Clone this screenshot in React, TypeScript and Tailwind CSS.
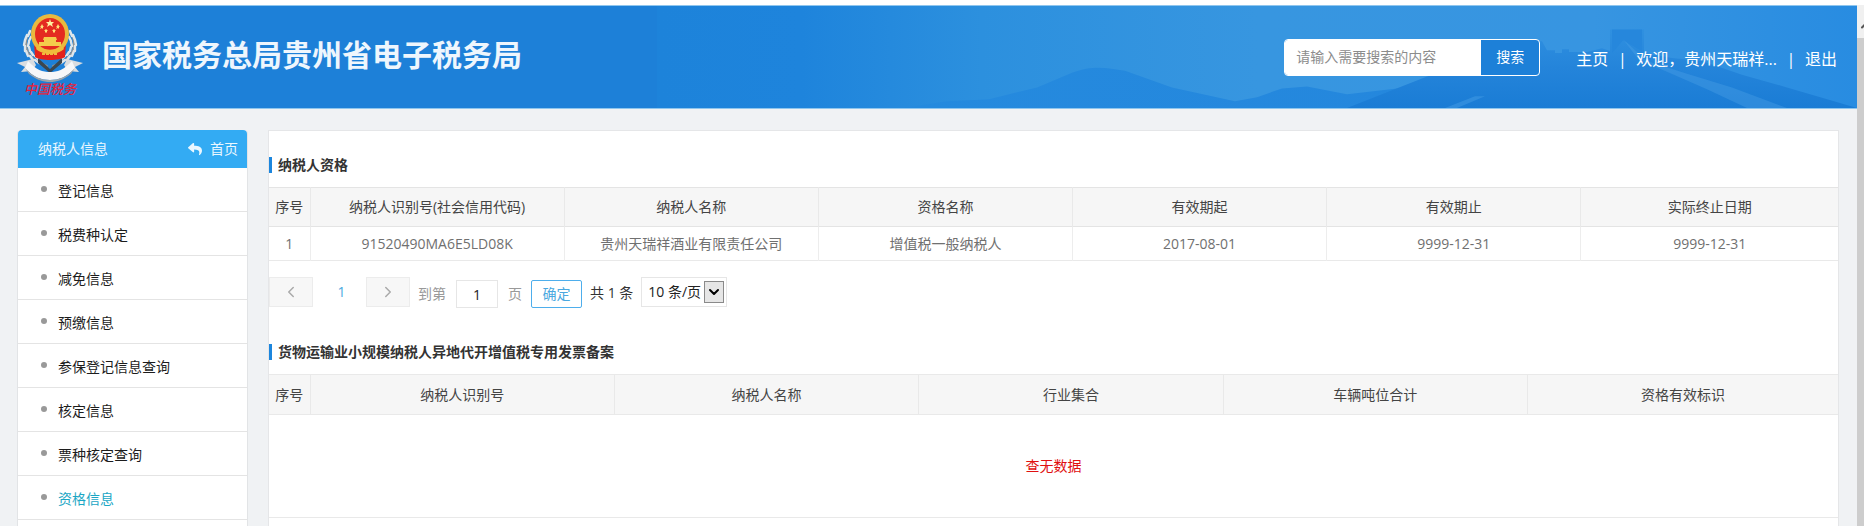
import { FaReply } from 'react-icons/fa';
import { ChevronDown, ChevronLeft, ChevronRight, ChevronUp } from 'lucide-react';

interface QualificationRow {
    taxpayerId: string;
    taxpayerName: string;
    qualification: string;
    validFrom: string;
    validTo: string;
    endDate: string;
}

const menuItems = [
    '登记信息',
    '税费种认定',
    '减免信息',
    '预缴信息',
    '参保登记信息查询',
    '核定信息',
    '票种核定查询',
    '资格信息',
];
const activeItem = '资格信息';

const qualificationColumns = ['纳税人识别号(社会信用代码)', '纳税人名称', '资格名称', '有效期起', '有效期止', '实际终止日期'];
const qualificationRows: QualificationRow[] = [
    {
        taxpayerId: '91520490MA6E5LD08K',
        taxpayerName: '贵州天瑞祥酒业有限责任公司',
        qualification: '增值税一般纳税人',
        validFrom: '2017-08-01',
        validTo: '9999-12-31',
        endDate: '9999-12-31',
    },
];

const invoiceColumns = ['纳税人识别号', '纳税人名称', '行业集合', '车辆吨位合计', '资格有效标识'];

function Emblem() {
    return (
        <svg className="h-22 w-17 shrink-0" viewBox="0 0 68 88" role="img" aria-label="中国税务">
            {/* wheat ears */}
            <g fill="none" stroke="#dfe6ea" strokeLinecap="round">
                <path d="M14 19C6 30 9 46 31 53" strokeWidth="2" stroke="#8b9093" />
                <path d="M54 19C62 30 59 46 37 53" strokeWidth="2" stroke="#8b9093" />
                <path
                    d="M14 18l-2 5M11 22l-2 5M9 27l-1 5M9 33l0 5M10 38l2 5M14 43l3 4M19 47l4 3M15 24l-2 4M13 29l-1 4M13 34l1 4M15 39l2 3M19 43l3 3"
                    strokeWidth="2.4"
                />
                <path
                    d="M54 18l2 5M57 22l2 5M59 27l1 5M59 33l0 5M58 38l-2 5M54 43l-3 4M49 47l-4 3M53 24l2 4M55 29l1 4M55 34l-1 4M53 39l-2 3M49 43l-3 3"
                    strokeWidth="2.4"
                />
            </g>
            <path d="M22 45L34 56L46 45V50L34 60L22 50z" fill="#3a4650" />
            {/* ribbon */}
            <path d="M1 50L17 46L20 52L16 58L5 59L9 54z" fill="#d9dde0" />
            <path d="M67 50L51 46L48 52L52 58L63 59L59 54z" fill="#d9dde0" />
            <path d="M12 48C20 57 27 59 34 59C41 59 48 57 56 48L59 55C51 64 43 67 34 67C25 67 17 64 9 55z" fill="#f6f7f8" />
            <path d="M9 55C17 64 25 67 34 67C43 67 51 64 59 55L55 61C47 67 41 69 34 69C27 69 21 67 13 61z" fill="#9ea5a9" />
            {/* national emblem */}
            <path d="M18 29h32l-1 15c-5 4-25 4-30 0z" fill="#e3221c" />
            <ellipse cx="34" cy="21" rx="19" ry="20" fill="#e9b93e" />
            <ellipse cx="34" cy="21" rx="15" ry="16" fill="#e42a20" />
            <path d="M34 6l1 3h3l-2 2 1 3-3-2-3 2 1-3-2-2h3z" fill="#fff0a0" />
            <path
                d="M26 11l1 2h1l-1 1v2l-1-1-2 1 1-2-1-1h1zM42 11l1 2h1l-1 1v2l-1-1-2 1 1-2-1-1h1zM30 16l1 1h1l-1 1v2l-1-1-1 1v-2l-1-1h1zM38 16l1 1h1l-1 1v2l-1-1-1 1v-2l-1-1h1z"
                fill="#ffe27a"
            />
            <path d="M28 24h12l1 3h-1v2h5v4H23v-4h5v-2h-1z" fill="#f4cc4b" />
            <path d="M22 33c6 5 18 5 24 0l2 3c-6 6-22 6-28 0z" fill="#f0bd3c" />
            <path d="M26 41h16" stroke="#f0bd3c" strokeWidth="2" strokeDasharray="3 1" />
            <text x="34" y="81" textAnchor="middle" fontSize="13" fontStyle="italic" fontWeight="500" fill="#e5233d">
                中国税务
            </text>
        </svg>
    );
}

function HeaderScenery() {
    return (
        <svg
            className="absolute inset-y-0 right-0 h-full w-[1200px]"
            viewBox="0 0 1200 104"
            preserveAspectRatio="none"
            aria-hidden="true"
        >
            <defs>
                <linearGradient id="sky" x1="0" y1="0" x2="1" y2="0">
                    <stop offset="0" stopColor="#1d83da" />
                    <stop offset="0.12" stopColor="#1e84dc" />
                    <stop offset="0.27" stopColor="#2c90de" />
                    <stop offset="0.5" stopColor="#3796e0" />
                    <stop offset="0.78" stopColor="#3795e1" />
                    <stop offset="1" stopColor="#288ce1" />
                </linearGradient>
                <linearGradient id="ridge" x1="0" y1="0" x2="0" y2="1">
                    <stop offset="0" stopColor="#2f90e0" />
                    <stop offset="0.5" stopColor="#2484da" />
                    <stop offset="1" stopColor="#1a7cd5" />
                </linearGradient>
                <linearGradient id="hill" x1="0" y1="0" x2="1" y2="0">
                    <stop offset="0" stopColor="#258ade" />
                    <stop offset="1" stopColor="#2487dd" />
                </linearGradient>
            </defs>
            <rect width="1200" height="104" fill="url(#sky)" />
            <path
                d="M245 104L290 97L332 95L380 83L415 68C436 60 450 63 468 66L515 83L578 97L600 93L625 84L650 82L690 90L740 84L780 104z"
                fill="url(#hill)"
            />
            <path
                d="M690 104L735 86L770 72L800 62L835 44L855 34L885 36L890 45H898V48H905V44H912V47H930L945 43L953 46V24H987V48L1015 53L1045 56L1085 70L1130 83L1160 92L1200 104z"
                fill="url(#ridge)"
            />
            <path d="M955 24H985V46L966 35L955 48z" fill="#2687dc" />
            <path d="M966 34L990 56L1030 69L1075 83L1130 104H1090L1050 85L1010 67L982 55z" fill="#4aa0e6" opacity="0.4" />
            <path d="M788 104L818 92L828 92L800 104z" fill="#4aa0e6" opacity="0.45" />
        </svg>
    );
}

function Header() {
    return (
        <header className="relative flex h-26 shrink-0 items-center border-y border-[#8fc6ee] bg-[#1d80d8] pr-5 pl-4">
            <HeaderScenery />
            <div className="relative flex min-w-0 flex-1 items-center gap-[18px]">
                <Emblem />
                <h1 className="pb-1 text-[30px] leading-10 font-bold whitespace-nowrap text-[#eef6fd]">国家税务总局贵州省电子税务局</h1>
            </div>
            <form className="relative flex h-[37px] w-64 shrink-0 overflow-hidden rounded-sm border border-white bg-[#1d80d8]">
                <input
                    type="text"
                    aria-label="搜索"
                    placeholder="请输入需要搜索的内容"
                    className="min-w-0 flex-1 bg-white px-[11px] text-sm outline-none placeholder:text-[#8c8c8c]"
                />
                <button type="button" className="w-[58px] text-sm text-white">
                    搜索
                </button>
            </form>
            <nav className="relative ml-9 flex shrink-0 items-center pt-1 text-base text-white">
                <a href="#home">主页</a>
                <span className="w-7 text-center">|</span>
                <a href="#user">欢迎，贵州天瑞祥...</a>
                <span className="w-7 text-center">|</span>
                <a href="#logout">退出</a>
            </nav>
        </header>
    );
}

function Sidebar() {
    return (
        <aside className="w-[231px] shrink-0 self-start rounded-t border-x border-[#e2e4e6] bg-white text-sm">
            <div className="flex h-[38px] items-center justify-between rounded-t bg-[#33abf3] pr-[9px] pl-5 text-[#eaf7ff]">
                <span>纳税人信息</span>
                <a href="#index" className="flex items-center gap-2">
                    <FaReply className="size-[14px]" />
                    首页
                </a>
            </div>
            <ul>
                {menuItems.map((item) => (
                    <li key={item} className="border-b border-[#e4e4e4]">
                        <a
                            href="#menu"
                            className={`flex h-[43px] items-center gap-[11px] pt-[2px] pl-[23px] ${item === activeItem ? 'text-[#1aa6c4]' : 'text-[#1c1c1c]'}`}
                        >
                            <span className="mb-1 size-[6px] rounded-full bg-[#999]"></span>
                            {item}
                        </a>
                    </li>
                ))}
                <li className="h-11"></li>
            </ul>
        </aside>
    );
}

function SectionTitle({ children }: { children: string }) {
    return (
        <h2 className="flex items-center gap-[6px] text-sm leading-5 font-bold text-[#333]">
            <span className="h-4 w-[3px] bg-[#1c86dd]"></span>
            {children}
        </h2>
    );
}

function Pagination() {
    return (
        <div className="flex h-[30px] items-center text-sm text-[#333]">
            <button type="button" aria-label="上一页" className="flex h-[30px] w-11 items-center justify-center border border-[#ececec] bg-[#f7f7f7] text-[#aaa]">
                <ChevronLeft className="size-[18px]" />
            </button>
            <span className="w-[53px] pl-1 text-center text-[#4aa8e0]">1</span>
            <button type="button" aria-label="下一页" className="flex h-[30px] w-11 items-center justify-center border border-[#ececec] bg-[#f7f7f7] text-[#aaa]">
                <ChevronRight className="size-[18px]" />
            </button>
            <label className="ml-2 flex items-center gap-[10px] pt-1 text-[#999]">
                到第
                <input
                    type="text"
                    defaultValue="1"
                    className="h-7 w-[42px] border border-[#e6e6e6] bg-white text-center text-[#222] outline-none"
                />
                页
            </label>
            <button type="button" className="mt-1 ml-[9px] h-7 w-[51px] rounded-xs border border-[#4eaeec] text-[#4aa8e0]">
                确定
            </button>
            <span className="mt-[2px] ml-2">共 1 条</span>
            <label className="relative ml-2 flex items-center">
                <select
                    aria-label="每页条数"
                    className="h-[30px] w-[86px] appearance-none border border-[#e6e6e6] bg-white pl-[6px] text-sm text-[#222] outline-none"
                >
                    <option>10 条/页</option>
                </select>
                <span className="pointer-events-none absolute right-[3px] flex h-[22px] w-5 items-center justify-center border border-[#8a8a8a] bg-[#e6e6e6] text-black">
                    <ChevronDown className="size-4" strokeWidth={3} />
                </span>
            </label>
        </div>
    );
}

export default function App() {
    return (
        <div className="h-screen overflow-hidden bg-white pt-[5px] font-['Open_Sans','Noto_Sans_CJK_SC',sans-serif]">
            <div className="flex h-full">
                <div className="flex min-w-0 flex-1 flex-col bg-[#f0f2f4]">
                    <Header />
                    <div className="flex gap-5 pt-[21px] pr-[18px] pl-[17px]">
                        <Sidebar />
                        <main className="min-w-0 flex-1 border border-[#e5e6e8] bg-white pb-10">
                            <div className="pt-6 pb-3">
                                <SectionTitle>纳税人资格</SectionTitle>
                            </div>
                            <table className="w-full table-fixed border-collapse text-center text-sm">
                                <thead>
                                    <tr className="h-[39px] border-y border-[#e4e4e4] bg-[#f6f6f6] text-[#444]">
                                        <th className="w-[41px] border-r border-[#e9e9e9] font-normal">序号</th>
                                        {qualificationColumns.map((column) => (
                                            <th key={column} className="w-[16.2%] border-r border-[#e9e9e9] font-normal last:w-auto last:border-r-0">
                                                {column}
                                            </th>
                                        ))}
                                    </tr>
                                </thead>
                                <tbody>
                                    {qualificationRows.map((row, index) => (
                                        <tr key={row.taxpayerId} className="h-[34px] border-b border-[#e9e9e9] text-[#707070]">
                                            <td className="border-r border-[#ededed]">{index + 1}</td>
                                            <td className="border-r border-[#ededed]">{row.taxpayerId}</td>
                                            <td className="border-r border-[#ededed]">{row.taxpayerName}</td>
                                            <td className="border-r border-[#ededed]">{row.qualification}</td>
                                            <td className="border-r border-[#ededed]">{row.validFrom}</td>
                                            <td className="border-r border-[#ededed]">{row.validTo}</td>
                                            <td>{row.endDate}</td>
                                        </tr>
                                    ))}
                                </tbody>
                            </table>
                            <div className="pt-4">
                                <Pagination />
                            </div>
                            <div className="pt-[35px] pb-3">
                                <SectionTitle>货物运输业小规模纳税人异地代开增值税专用发票备案</SectionTitle>
                            </div>
                            <table className="w-full table-fixed border-collapse text-center text-sm">
                                <thead>
                                    <tr className="h-10 border-y border-[#e9e9e9] bg-[#f6f6f6] text-[#444]">
                                        <th className="w-[41px] border-r border-[#e9e9e9] font-normal">序号</th>
                                        {invoiceColumns.map((column) => (
                                            <th key={column} className="w-[19.4%] border-r border-[#e9e9e9] font-normal last:w-auto last:border-r-0">
                                                {column}
                                            </th>
                                        ))}
                                    </tr>
                                </thead>
                                <tbody>
                                    <tr className="h-[103px] border-b border-[#e9e9e9]">
                                        <td colSpan={6} className="text-[#e01010]">
                                            查无数据
                                        </td>
                                    </tr>
                                </tbody>
                            </table>
                        </main>
                    </div>
                </div>
                <div className="flex w-[7px] shrink-0 flex-col overflow-hidden bg-[#f0f0f0]">
                    <div className="flex h-[33px] shrink-0 items-center pt-2 pl-[2px]">
                        <ChevronUp className="size-3 shrink-0 text-[#555]" strokeWidth={4} />
                    </div>
                    <div className="flex-1 bg-[#cdcdcd]"></div>
                </div>
            </div>
        </div>
    );
}
